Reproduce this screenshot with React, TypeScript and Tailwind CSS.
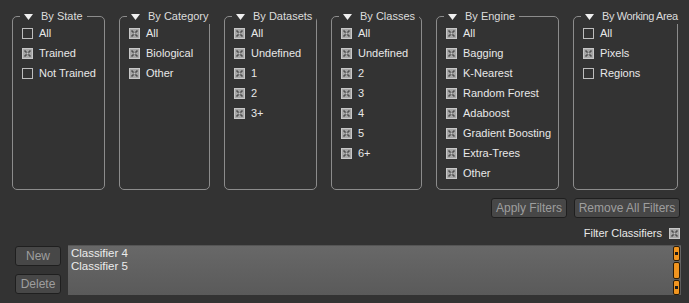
import React from 'react'

type Item = { label: string; checked: boolean }
type Group = { title: string; width: string; titleClass?: string; items: Item[] }

const on = (label: string): Item => ({ label, checked: true })
const off = (label: string): Item => ({ label, checked: false })

const groups: Group[] = [
  { title: 'By State', width: 'w-[93px]', items: [off('All'), on('Trained'), off('Not Trained')] },
  { title: 'By Category', width: 'w-[91px]', items: [on('All'), on('Biological'), on('Other')] },
  { title: 'By Datasets', width: 'w-[93px]', items: [on('All'), on('Undefined'), on('1'), on('2'), on('3+')] },
  { title: 'By Classes', width: 'w-[91px]', items: [on('All'), on('Undefined'), on('2'), on('3'), on('4'), on('5'), on('6+')] },
  {
    title: 'By Engine',
    width: 'w-[123px]',
    items: [
      on('All'),
      on('Bagging'),
      on('K-Nearest'),
      on('Random Forest'),
      on('Adaboost'),
      on('Gradient Boosting'),
      on('Extra-Trees'),
      on('Other'),
    ],
  },
  {
    title: 'By Working Area',
    width: 'w-[105px]',
    titleClass: 'tracking-[-0.4px]',
    items: [off('All'), on('Pixels'), off('Regions')],
  },
]

function CheckBox({ checked }: { checked: boolean }) {
  return (
    <svg width="11" height="11" viewBox="0 0 11 11" className="shrink-0">
      {checked ? (
        <>
          <rect x="0.5" y="0.5" width="10" height="10" fill="#a6a6a6" stroke="#c8c8c8" />
          <path d="M2.5 2.5 L8.5 8.5 M8.5 2.5 L2.5 8.5" stroke="#505050" strokeWidth="1.6" />
          <rect x="4.5" y="4.5" width="2" height="2" fill="#c4c4c4" />
        </>
      ) : (
        <rect x="0.5" y="0.5" width="10" height="10" fill="none" stroke="#bdbdbd" />
      )}
    </svg>
  )
}

function FilterGroup({ group }: { group: Group }) {
  return (
    <div className={`relative h-[174px] shrink-0 rounded-[5px] border border-[#8c8c8c] ${group.width}`}>
      {/* title sits over the top border, like a legend */}
      <div className="absolute left-[7px] top-[-8px] flex h-[15px] items-center whitespace-nowrap bg-[#333333] pl-[4px] pr-[4px]">
        <svg width="9" height="6" viewBox="0 0 9 6" className="mr-[8px] shrink-0">
          <path d="M0 0 H9 L4.5 6 Z" fill="#f0f0f0" />
        </svg>
        <span className={`text-[11px] text-[#dcdcdc] ${group.titleClass ?? ''}`}>{group.title}</span>
      </div>
      <div className="flex flex-col pl-[9px] pt-[6px]">
        {group.items.map((item, i) => (
          <div key={i} className="flex h-[20px] items-center gap-[6px]">
            <CheckBox checked={item.checked} />
            <span className="text-[11px] text-[#e8e8e8] whitespace-nowrap">{item.label}</span>
          </div>
        ))}
      </div>
    </div>
  )
}

function Btn({ children, className = '' }: { children: React.ReactNode; className?: string }) {
  return (
    <button
      className={`flex h-[20px] items-center justify-center rounded-[3px] border border-[#1f1f1f] bg-[#474747] text-[12px] text-[#9e9e9e] ${className}`}
    >
      {children}
    </button>
  )
}

function ScrollPiece({ dot, className = '' }: { dot?: boolean; className?: string }) {
  return (
    <div
      className={`flex w-[7px] shrink-0 items-center justify-center rounded-[2px] border border-[#2a1c08] bg-[#f2951f] ${className}`}
    >
      {dot && <div className="h-[3px] w-[3px] bg-[#1a1a1a]" />}
    </div>
  )
}

export default function App() {
  return (
    <div
      className="flex h-[303px] w-[689px] flex-col overflow-hidden bg-[#333333]"
      style={{ fontFamily: '"Liberation Sans", Arial, sans-serif' }}
    >
      {/* Filter groups */}
      <div className="flex gap-[14px] pl-[12px] pt-[16px]">
        {groups.map((g) => (
          <FilterGroup key={g.title} group={g} />
        ))}
      </div>

      {/* Filter actions */}
      <div className="mt-[8px] flex justify-end gap-[7px] pr-[9px]">
        <Btn className="w-[76px]">Apply Filters</Btn>
        <Btn className="w-[106px]">Remove All Filters</Btn>
      </div>

      <div className="mt-[9px] flex h-[12px] items-center justify-end gap-[7px] pr-[9px]">
        <span className="text-[11px] text-[#e8e8e8]">Filter Classifiers</span>
        <CheckBox checked />
      </div>

      {/* Classifier list */}
      <div className="mt-[6px] flex gap-[7px] pl-[15px] pr-[8px]">
        <div className="flex flex-col gap-[8px] pt-[1px]">
          <Btn className="w-[46px]">New</Btn>
          <Btn className="w-[46px]">Delete</Btn>
        </div>
        <div className="flex h-[50px] flex-1 border-t border-[#555555] bg-gradient-to-b from-[#686868] to-[#5a5a5a]">
          <div className="flex-1 pl-[3px] pt-[1px] text-[11.5px] leading-[13px] text-[#ececec]">
            <div>Classifier 4</div>
            <div>Classifier 5</div>
          </div>
          <div className="flex flex-col gap-[1px] pr-[1px]">
            <ScrollPiece dot className="h-[15px]" />
            <ScrollPiece className="h-[17px]" />
            <ScrollPiece dot className="h-[15px]" />
          </div>
        </div>
      </div>
    </div>
  )
}
